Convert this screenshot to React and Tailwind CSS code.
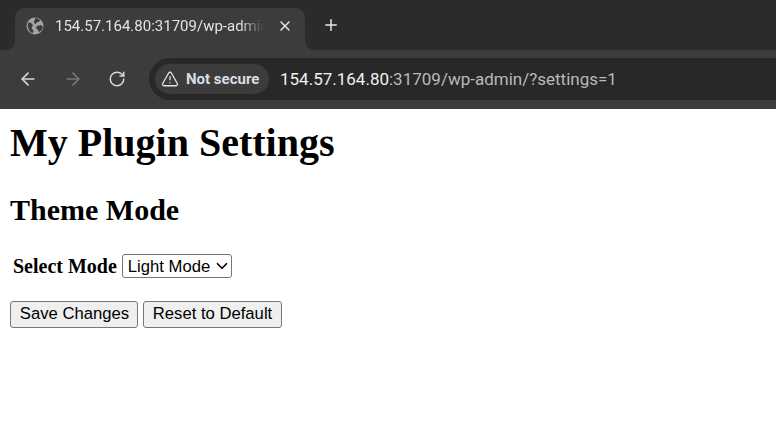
import React from 'react';
import { ArrowLeft, ArrowRight, RotateCw, X, Plus, TriangleAlert, ChevronDown } from 'lucide-react';

const GlobeIcon = () => (
  <svg viewBox="0 0 18 18" className="w-[18px] h-[18px] shrink-0">
    <circle cx="9" cy="9" r="8.5" fill="#a3a3a3" />
    <path d="M2 6c2-1 3 0 4 1s1 2 0 3 0 2 1 3 0 3-1 3C3 14 1 10 2 6zM9 1c2 0 4 1 5 2l-1 2-2 0-1 2-2-1 0-2 1-1z" fill="#3c3c3c" />
    <path d="M11 9l4-1 2 2c-1 3-2 4-4 5l-1-2-2-2z" fill="#3c3c3c" />
  </svg>
);

const App = () => {
  return (
    <div className="w-[776px] h-[428px] overflow-hidden bg-white flex flex-col">
      {/* Tab strip */}
      <div className="h-[50px] bg-[#2b2b2b] flex items-end pl-[15px]">
        <div className="relative w-[290px] h-[42px] bg-[#3c3c3c] rounded-t-[10px] flex items-center pl-[11px] pr-[11px] pb-[6px]">
          {/* Tab flares */}
          <span className="absolute bottom-0 left-[-10px] w-[10px] h-[10px] bg-[radial-gradient(circle_at_0_0,#2b2b2b_10px,#3c3c3c_10.5px)]" />
          <span className="absolute bottom-0 right-[-10px] w-[10px] h-[10px] bg-[radial-gradient(circle_at_100%_0,#2b2b2b_10px,#3c3c3c_10.5px)]" />
          <GlobeIcon />
          <span className="ml-[11px] w-[209px] overflow-hidden whitespace-nowrap text-[15px] text-[#e3e3e3] font-['Roboto',sans-serif] [mask-image:linear-gradient(to_right,black_88%,transparent)]">
            154.57.164.80:31709/wp-admin/?settings=1
          </span>
          <X className="ml-[13px] w-[16px] h-[16px] text-[#e8e8e8]" strokeWidth={2.25} />
        </div>
        <div className="ml-[17px] mb-[16px]">
          <Plus className="w-[18px] h-[18px] text-[#e8e8e8]" strokeWidth={2} />
        </div>
      </div>

      {/* Toolbar */}
      <div className="h-[59px] bg-[#3c3c3c] flex items-center pl-[18px] pb-[1px]">
        <ArrowLeft className="w-[20px] h-[20px] text-[#d8d8d8]" strokeWidth={2} />
        <ArrowRight className="ml-[25px] w-[20px] h-[20px] text-[#777777]" strokeWidth={2} />
        <RotateCw className="ml-[25px] w-[18px] h-[18px] text-[#d8d8d8]" strokeWidth={2} />
        <div className="ml-[23px] flex-1 h-[42px] bg-[#282828] rounded-l-[21px] flex items-center pl-[6px]">
          <div className="h-[30px] w-[114px] bg-[#3c3c3c] rounded-[15px] flex items-center pl-[6px]">
            <TriangleAlert className="w-[18px] h-[18px] text-[#e3e3e3]" strokeWidth={1.75} />
            <span className="ml-[7px] text-[15px] font-bold text-[#d8dfe6] font-['Roboto',sans-serif]">Not secure</span>
          </div>
          <span className="ml-[11px] mt-[1px] text-[17px] font-['Roboto',sans-serif] whitespace-nowrap text-[#b9b9b9]">
            <span className="text-[#f0f0f0]">154.57.164.80</span>:31709/wp-admin/?settings=1
          </span>
        </div>
      </div>

      {/* Page */}
      <div className="flex-1 p-[10px] text-black font-['Liberation_Serif',serif]">
        <h1 className="text-[40px] leading-[46px] font-bold mt-[1px]">My Plugin Settings</h1>
        <h2 className="text-[30px] leading-[35px] font-bold mt-[26px]">Theme Mode</h2>
        <div className="flex items-center mt-[27px] pl-[3px]">
          <label className="text-[20px] leading-[23px] font-bold">Select Mode</label>
          <div className="ml-[5px] w-[110px] h-[24px] bg-white border border-[#767676] rounded-[3px] flex items-center pl-[5px] font-['Liberation_Sans',sans-serif] text-[16.67px]">
            <span className="flex-1">Light Mode</span>
            <ChevronDown className="w-[18px] h-[18px]" strokeWidth={2.25} />
          </div>
        </div>
        <div className="flex gap-[5px] mt-[23px] font-['Liberation_Sans',sans-serif] text-[16.67px] leading-[19px]">
          <button className="w-[128px] h-[27px] pb-[3px] pl-[1px] bg-[#efefef] border border-[#767676] rounded-[3px] text-black">Save Changes</button>
          <button className="w-[139px] h-[27px] pb-[3px] bg-[#efefef] border border-[#767676] rounded-[3px] text-black">Reset to Default</button>
        </div>
      </div>
    </div>
  );
};

export default App;
